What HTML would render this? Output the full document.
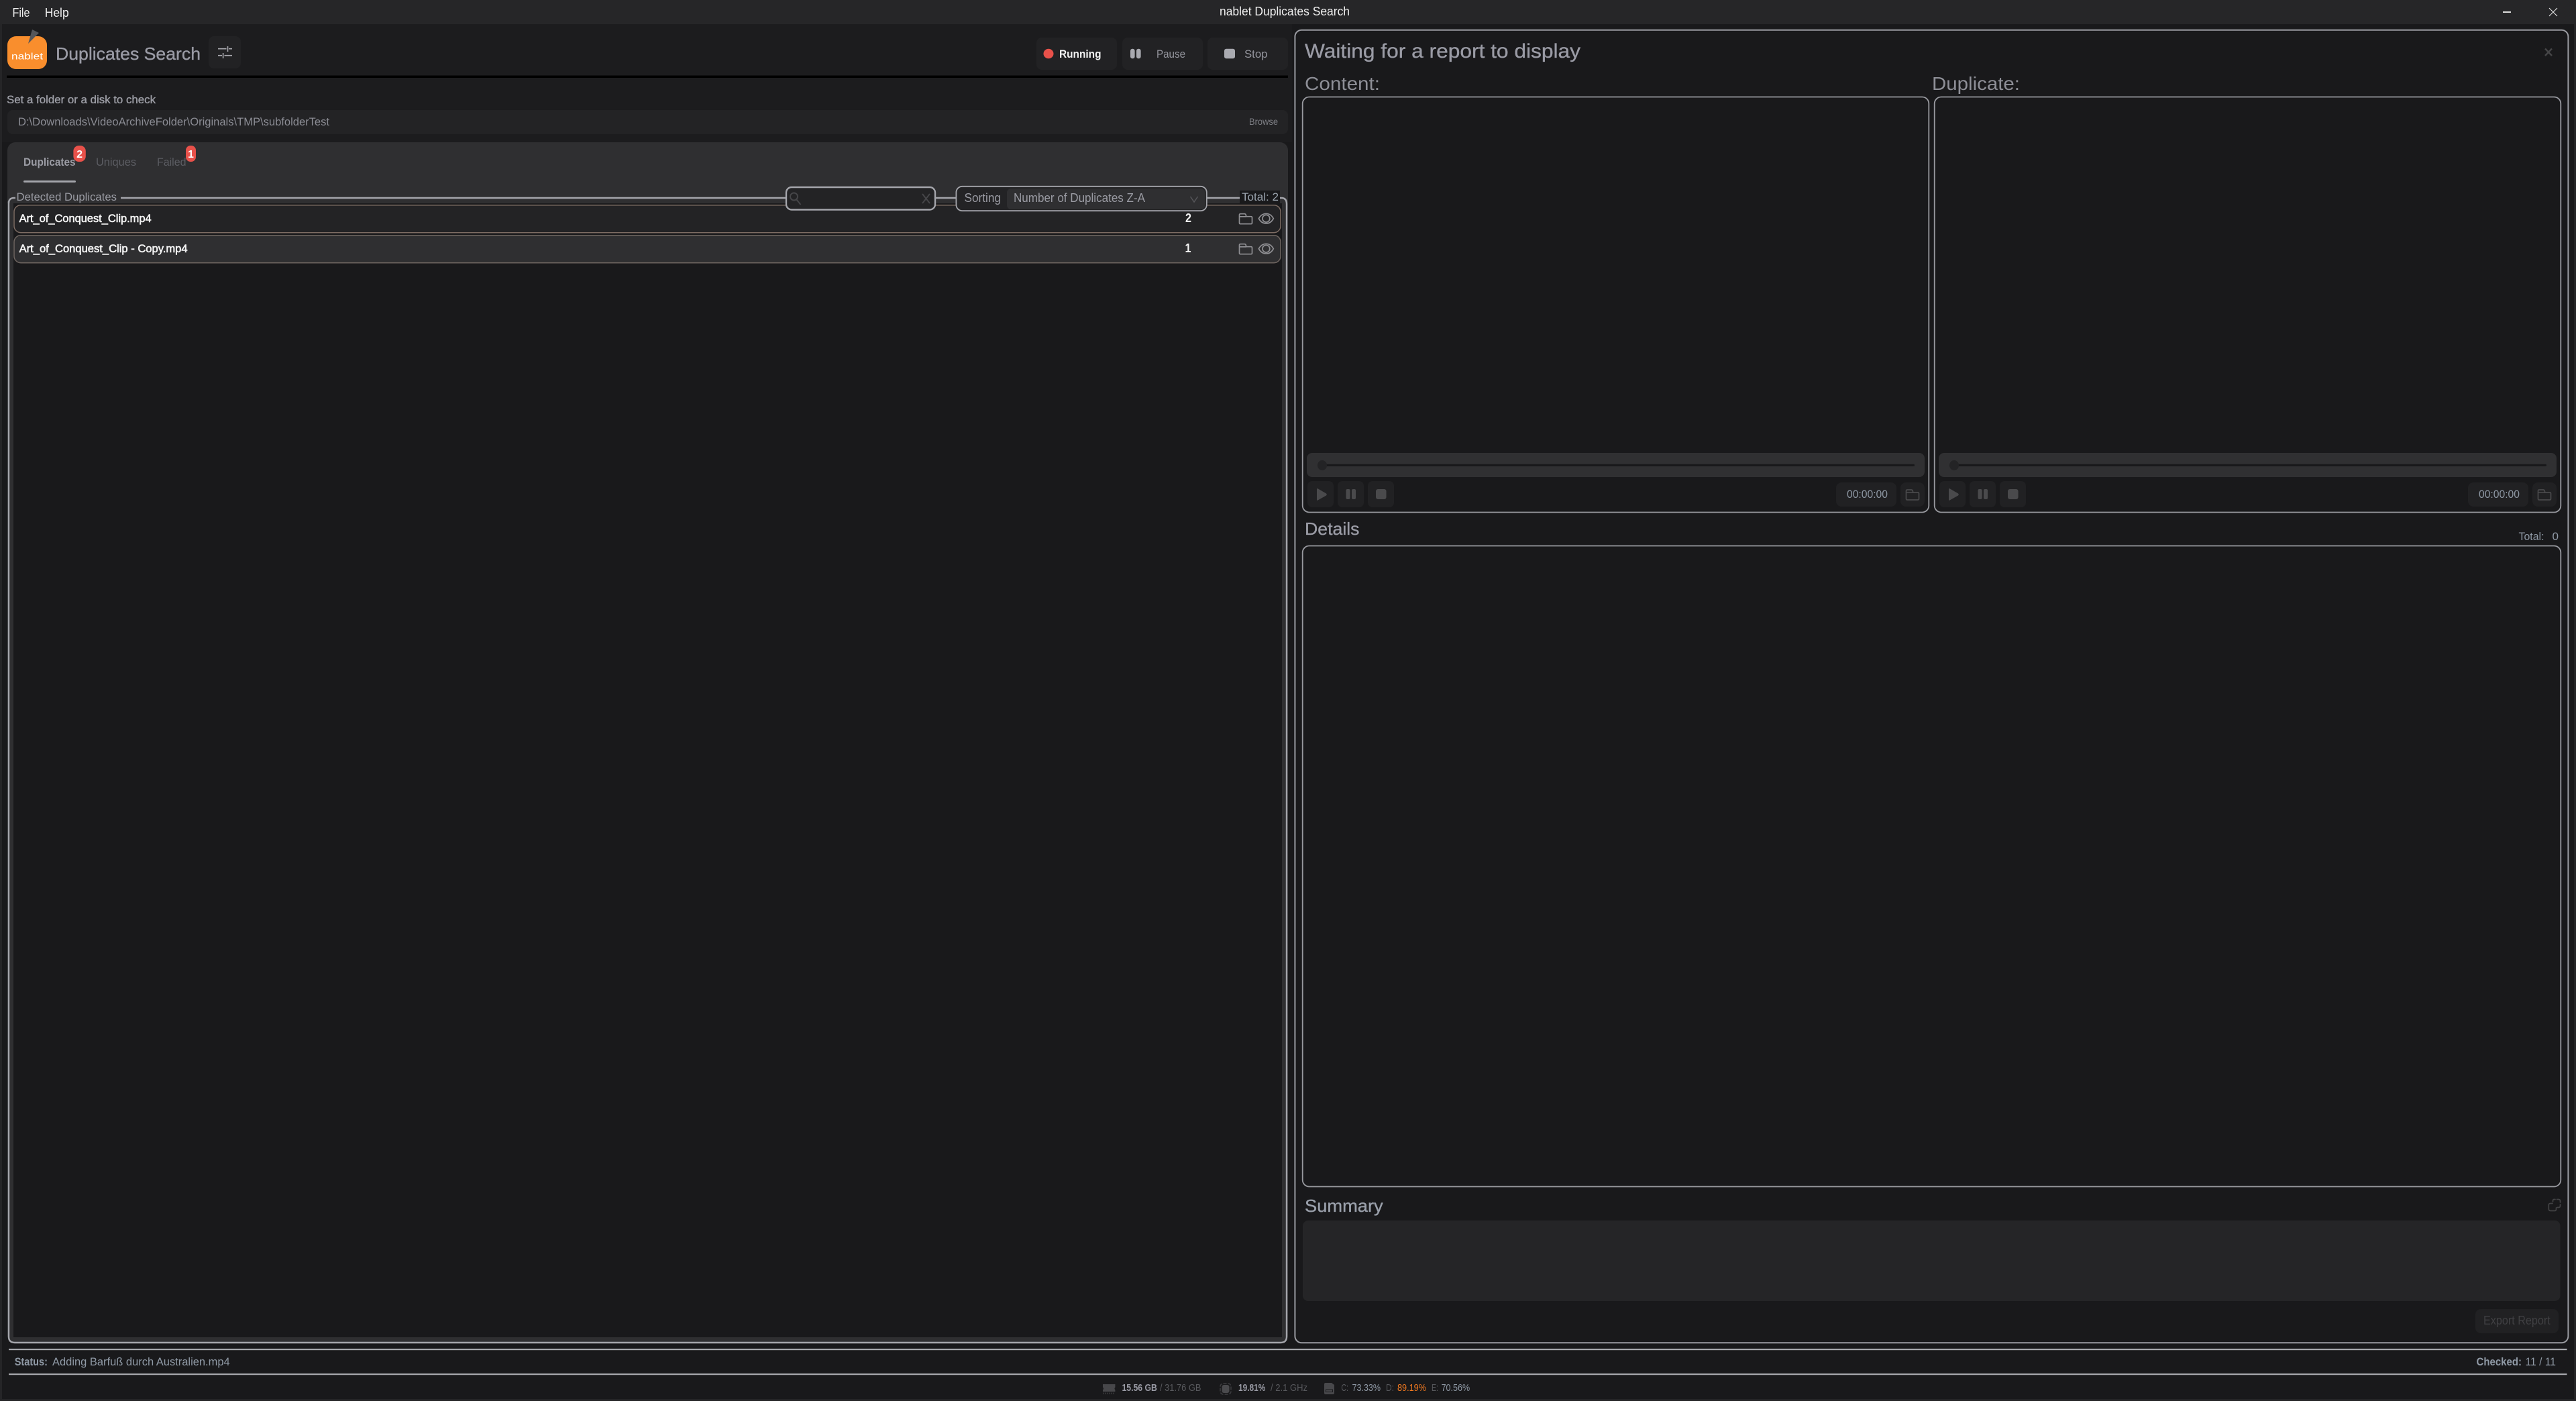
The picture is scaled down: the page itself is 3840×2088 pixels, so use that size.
<!DOCTYPE html>
<html lang="en"><head><meta charset="utf-8"><title>nablet Duplicates Search</title>
<style>
html,body{margin:0;padding:0;background:#19191b;width:3840px;height:2088px;overflow:hidden}
svg{display:block}
text{font-family:"Liberation Sans",sans-serif;white-space:pre}
.b{font-weight:700}
.s{stroke-width:.35px}
.m{stroke-width:.6px}
</style></head><body>
<svg xmlns="http://www.w3.org/2000/svg" width="3840" height="2088" viewBox="0 0 3840 2088">
<defs>
<g id="folder" fill="none" stroke-width="1.7" stroke-linejoin="round"><path d="M1 14.5V2.6Q1 1 2.6 1H8.6Q10.2 1 10.7 2.6L11.3 5H18.4Q20 5 20 6.6V14.4Q20 16 18.4 16H2.6Q1 16 1 14.5ZM1 5.2H11.3"/></g>
<g id="eye" fill="none" stroke="#8f8f93" stroke-width="1.7"><path d="M.7 8.2C6 -1.5 17.5 -1.5 22.6 8.2C17.5 18 6 18 .7 8.2Z"/><circle cx="11.7" cy="8.2" r="5.4"/></g>
</defs>
<rect width="3840" height="2088" fill="#19191b"/>
<!-- window chrome -->
<rect width="3840" height="36" fill="#262628"/>
<rect x="0" y="36" width="3" height="2052" fill="#252527"/>
<rect x="3837" y="36" width="3" height="2052" fill="#252527"/>
<rect x="0" y="2085" width="3840" height="3" fill="#252527"/>
<text x="18.5" y="25" font-size="18" fill="#eeeeee" textLength="26" lengthAdjust="spacingAndGlyphs">File</text>
<text x="66.7" y="25" font-size="18" fill="#eeeeee" textLength="36" lengthAdjust="spacingAndGlyphs">Help</text>
<text x="1818" y="23" font-size="18" fill="#eeeeee" textLength="194" lengthAdjust="spacingAndGlyphs">nablet Duplicates Search</text>
<rect x="3731" y="17" width="12" height="2" fill="#dddddd"/>
<path d="M3800 12L3812 24M3812 12L3800 24" stroke="#e8e8e8" stroke-width="1" fill="none"/>

<!-- left header -->
<rect x="3" y="36" width="1923" height="176" fill="#1c1c1e"/>
<rect x="11" y="54" width="59" height="49" rx="13" fill="#f98e2d"/>
<path d="M42 65L48 44L58 49Z" fill="#55565a"/>
<text x="17" y="88.5" font-size="14" fill="#ffffff" textLength="47" lengthAdjust="spacingAndGlyphs">nablet</text>
<text x="83" y="89" font-size="26" fill="#9a9ba5" class="s" stroke="#9a9ba5" textLength="216" lengthAdjust="spacingAndGlyphs">Duplicates Search</text>
<rect x="311" y="54" width="48" height="48" rx="8" fill="#222224"/>
<path d="M325 72.7H337.5M341 72.7H346M339.5 69V77M325 82.7H331M334.5 82.7H346M332.6 79V87" stroke="#aaaab0" stroke-width="1.6" fill="none"/>

<rect x="1545" y="56" width="120" height="48" rx="8" fill="#222224"/>
<rect x="1673" y="56" width="120" height="48" rx="8" fill="#222224"/>
<rect x="1800" y="56" width="120" height="48" rx="8" fill="#222224"/>
<ellipse cx="1563" cy="80" rx="7.5" ry="7.3" fill="#e8514a"/>
<text x="1579" y="86" font-size="17" class="b" fill="#f2f2f2" textLength="62.5" lengthAdjust="spacingAndGlyphs">Running</text>
<rect x="1685" y="72.7" width="6.6" height="14.6" rx="3" fill="#a9aab0"/>
<rect x="1694" y="72.7" width="6.6" height="14.6" rx="3" fill="#a9aab0"/>
<text x="1724" y="86" font-size="17" fill="#95969e" textLength="43" lengthAdjust="spacingAndGlyphs">Pause</text>
<rect x="1825" y="72.7" width="16" height="14.6" rx="3" fill="#a9aab0"/>
<text x="1855" y="86" font-size="17" fill="#95969e" textLength="34.5" lengthAdjust="spacingAndGlyphs">Stop</text>
<rect x="10" y="112.5" width="1910" height="3.5" fill="#000000"/>

<text x="10" y="154" font-size="17" fill="#9d9ea6" class="s" stroke="#9d9ea6" textLength="222" lengthAdjust="spacingAndGlyphs">Set a folder or a disk to check</text>
<rect x="11" y="164" width="1909" height="36" rx="8" fill="#232325"/>
<text x="27" y="187" font-size="17" fill="#8b8c94" textLength="464" lengthAdjust="spacingAndGlyphs">D:\Downloads\VideoArchiveFolder\Originals\TMP\subfolderTest</text>
<text x="1862" y="186" font-size="14" fill="#7e7f85" textLength="43" lengthAdjust="spacingAndGlyphs">Browse</text>

<!-- results panel -->
<rect x="11" y="212" width="1909" height="1790" rx="12" fill="#2f2f31"/>
<rect x="20" y="303" width="1891" height="1690" fill="#19191b"/>
<text x="35" y="247" font-size="17" fill="#9c9da5" class="b" textLength="77.6" lengthAdjust="spacingAndGlyphs">Duplicates</text>
<rect x="35" y="269" width="78" height="3" rx="1.5" fill="#a4a5ab"/>
<text x="143" y="247" font-size="17" fill="#5c5d63" textLength="60" lengthAdjust="spacingAndGlyphs">Uniques</text>
<text x="234" y="247" font-size="17" fill="#5c5d63" textLength="43.5" lengthAdjust="spacingAndGlyphs">Failed</text>
<rect x="109.4" y="217" width="18.4" height="24" rx="8" fill="#e8514a"/>
<text x="118.6" y="235" font-size="16" class="b" fill="#ffffff" text-anchor="middle">2</text>
<rect x="277" y="217" width="15" height="24" rx="7" fill="#e8514a"/>
<text x="284.5" y="235" font-size="16" class="b" fill="#ffffff" text-anchor="middle">1</text>

<path d="M13 303Q13 295 21 295H23" fill="none" stroke="#a4a5ab" stroke-width="2.4"/>
<path d="M13 300V1992Q13 2001 22 2001H1909Q1918 2001 1918 1992V304Q1918 295 1910 295H1906" fill="none" stroke="#a4a5ab" stroke-width="2.4"/>
<path d="M180 295H1172M1395 295H1425M1799 295H1850" stroke="#a4a5ab" stroke-width="2.4" fill="none"/>
<text x="24.5" y="299" font-size="17" fill="#9a9ba3" textLength="149.5" lengthAdjust="spacingAndGlyphs">Detected Duplicates</text>
<rect x="1848" y="284" width="60" height="19" fill="#19191b"/>
<text x="1851" y="299" font-size="17" fill="#9aa3ad" textLength="55" lengthAdjust="spacingAndGlyphs">Total: 2</text>

<rect x="21" y="305.7" width="1888" height="41" rx="10" fill="#232325" stroke="#7d6c63" stroke-width="1.5"/>
<rect x="21" y="350.7" width="1888" height="41" rx="10" fill="#2f2f31" stroke="#6e6560" stroke-width="1.5"/>
<text x="28.6" y="331" font-size="17" class="m" fill="#f4f4f4" stroke="#f4f4f4" textLength="197" lengthAdjust="spacingAndGlyphs">Art_of_Conquest_Clip.mp4</text>
<text x="28.6" y="376" font-size="17" class="m" fill="#f4f4f4" stroke="#f4f4f4" textLength="251" lengthAdjust="spacingAndGlyphs">Art_of_Conquest_Clip - Copy.mp4</text>
<text x="1767" y="331" font-size="18" class="b" fill="#f4f4f4" textLength="9" lengthAdjust="spacingAndGlyphs">2</text>
<text x="1766.5" y="376" font-size="18" class="b" fill="#f4f4f4" textLength="9" lengthAdjust="spacingAndGlyphs">1</text>
<use href="#folder" x="1846.5" y="317.7" stroke="#8f8f93"/>
<use href="#eye" x="1875.7" y="317.5"/>
<use href="#folder" x="1846.5" y="362.7" stroke="#8f8f93"/>
<use href="#eye" x="1875.7" y="362.5"/>

<rect x="1172" y="279" width="222" height="33.5" rx="8" fill="#232325" stroke="#a4a5ab" stroke-width="2.4"/>
<g fill="none" stroke="#454548" stroke-width="2"><circle cx="1183.5" cy="293" r="5.5"/><path d="M1187.5 297.5L1193.5 305"/><path d="M1375 289L1386 303M1386 289L1375 303"/></g>
<rect x="1425.4" y="277.8" width="373.4" height="36.4" rx="9" fill="#232325" stroke="#a4a5ab" stroke-width="1.8"/>
<text x="1437.5" y="301" font-size="18" fill="#9a9ba3" textLength="54.5" lengthAdjust="spacingAndGlyphs">Sorting</text>
<rect x="1501" y="281" width="295" height="31" rx="6" fill="#2f2f31"/>
<text x="1511" y="301" font-size="18" fill="#9a9ba3" textLength="196" lengthAdjust="spacingAndGlyphs">Number of Duplicates Z-A</text>
<path d="M1774.5 293L1780 301L1785.5 293" stroke="#56565a" stroke-width="1.5" fill="none"/>

<!-- right panel -->
<rect x="1930.4" y="44.7" width="1898" height="1956.6" rx="10" fill="#19191b" stroke="#9a9ba1" stroke-width="2"/>
<text x="1945" y="86" font-size="30" fill="#9a9ba5" class="s" stroke="#9a9ba5" textLength="411" lengthAdjust="spacingAndGlyphs">Waiting for a report to display</text>
<path d="M3794 72.5L3804 83M3804 72.5L3794 83" stroke="#454547" stroke-width="2.4" fill="none"/>
<text x="1945" y="134" font-size="28" fill="#8e8f97" textLength="112" lengthAdjust="spacingAndGlyphs">Content:</text>
<text x="2880" y="134" font-size="28" fill="#8e8f97" textLength="131" lengthAdjust="spacingAndGlyphs">Duplicate:</text>

<rect x="1941.7" y="144.5" width="933.6" height="619" rx="10" fill="#19191b" stroke="#98999f" stroke-width="1.8"/>
<rect x="2883.7" y="144.5" width="933.6" height="619" rx="10" fill="#19191b" stroke="#98999f" stroke-width="1.8"/>

<!-- content player -->
<rect x="1948" y="675" width="921" height="36" rx="8" fill="#303032"/>
<rect x="1964" y="691.8" width="890" height="3.2" rx="1.6" fill="#19191b"/>
<ellipse cx="1971" cy="693.5" rx="7" ry="7.5" fill="#232325"/>
<rect x="1949" y="717" width="39" height="39" rx="7" fill="#212123"/>
<rect x="1994" y="717" width="39" height="39" rx="7" fill="#212123"/>
<rect x="2039" y="717" width="39" height="39" rx="7" fill="#212123"/>
<path d="M1963 729Q1963 727.5 1964.5 728.3L1977 735.5Q1978.5 737 1977 738.5L1964.5 745.5Q1963 746.5 1963 745Z" fill="#4a4a4c"/>
<rect x="2006.5" y="729" width="6" height="15" rx="2" fill="#4a4a4c"/>
<rect x="2015" y="729" width="6" height="15" rx="2" fill="#4a4a4c"/>
<rect x="2051" y="729" width="15.5" height="15" rx="3" fill="#4a4a4c"/>
<rect x="2737" y="719" width="90" height="36" rx="8" fill="#212123"/>
<text x="2753" y="742" font-size="17" fill="#8f99a5" textLength="61" lengthAdjust="spacingAndGlyphs">00:00:00</text>
<rect x="2833" y="719" width="36" height="36" rx="8" fill="#212123"/>
<use href="#folder" x="2840.5" y="729" stroke="#4a4a4c"/>

<!-- duplicate player -->
<rect x="2890" y="675" width="921" height="36" rx="8" fill="#303032"/>
<rect x="2906" y="691.8" width="890" height="3.2" rx="1.6" fill="#19191b"/>
<ellipse cx="2913" cy="693.5" rx="7" ry="7.5" fill="#232325"/>
<rect x="2891" y="717" width="39" height="39" rx="7" fill="#212123"/>
<rect x="2936" y="717" width="39" height="39" rx="7" fill="#212123"/>
<rect x="2981" y="717" width="39" height="39" rx="7" fill="#212123"/>
<path d="M2905 729Q2905 727.5 2906.5 728.3L2919 735.5Q2920.5 737 2919 738.5L2906.5 745.5Q2905 746.5 2905 745Z" fill="#4a4a4c"/>
<rect x="2948.5" y="729" width="6" height="15" rx="2" fill="#4a4a4c"/>
<rect x="2957" y="729" width="6" height="15" rx="2" fill="#4a4a4c"/>
<rect x="2993" y="729" width="15.5" height="15" rx="3" fill="#4a4a4c"/>
<rect x="3679" y="719" width="90" height="36" rx="8" fill="#212123"/>
<text x="3695" y="742" font-size="17" fill="#8f99a5" textLength="61" lengthAdjust="spacingAndGlyphs">00:00:00</text>
<rect x="3775" y="719" width="36" height="36" rx="8" fill="#212123"/>
<use href="#folder" x="3782.5" y="729" stroke="#4a4a4c"/>

<text x="1945" y="797" font-size="26" fill="#9a9ba5" class="s" stroke="#9a9ba5" textLength="81.5" lengthAdjust="spacingAndGlyphs">Details</text>
<text x="3754.5" y="805" font-size="17" fill="#8f99a5" textLength="38" lengthAdjust="spacingAndGlyphs">Total:</text>
<text x="3804.5" y="805" font-size="17" fill="#8f99a5" textLength="9.5" lengthAdjust="spacingAndGlyphs">0</text>
<rect x="1941.7" y="813.5" width="1875.6" height="955" rx="10" fill="#19191b" stroke="#98999f" stroke-width="1.8"/>

<text x="1945" y="1806" font-size="26" fill="#9aa0ab" class="s" stroke="#9aa0ab" textLength="116.7" lengthAdjust="spacingAndGlyphs">Summary</text>
<g fill="none" stroke="#434345" stroke-width="1.7" stroke-linecap="round"><path d="M3805.5 1791V1789.5Q3805.5 1787.5 3807.5 1787.5H3809M3811.5 1787.5H3814Q3816.5 1787.5 3816.5 1790V1792M3816.5 1795V1797Q3816.5 1799.5 3814 1799.5H3812"/><path d="M3805 1793.5H3802Q3799.3 1793.5 3799.3 1796V1801.5Q3799.3 1804.5 3802 1804.5H3808Q3810.5 1804.5 3810.5 1802V1800"/></g>
<rect x="1942" y="1819" width="1874.5" height="120" rx="8" fill="#252527"/>
<rect x="3690" y="1951" width="124" height="36" rx="8" fill="#212123"/>
<text x="3702" y="1974" font-size="18" fill="#404043" textLength="99.7" lengthAdjust="spacingAndGlyphs">Export Report</text>

<!-- status -->
<rect x="13" y="2010" width="3813.5" height="2.2" fill="#a8a9ae"/>
<rect x="13" y="2047" width="3813.5" height="2.2" fill="#a8a9ae"/>
<text x="21.7" y="2035" font-size="17" class="b" fill="#8f99a5" textLength="49.3" lengthAdjust="spacingAndGlyphs">Status:</text>
<text x="78" y="2035" font-size="17" fill="#8f99a5" textLength="264.7" lengthAdjust="spacingAndGlyphs">Adding Barfuß durch Australien.mp4</text>
<text x="3691.5" y="2035" font-size="17" class="b" fill="#8f99a5" textLength="67.5" lengthAdjust="spacingAndGlyphs">Checked:</text>
<text x="3764.5" y="2035" font-size="17" fill="#8f99a5" textLength="45.5" lengthAdjust="spacingAndGlyphs">11 / 11</text>

<!-- system stats -->
<path d="M1644 2063H1662.4V2067.5Q1660.5 2069.5 1662.4 2071.5V2074H1644V2071.5Q1646 2069.5 1644 2067.5Z" fill="#47474a"/>
<path d="M1645 2075.5V2078M1648 2075.5V2078M1651 2075.5V2078M1654 2075.5V2078M1657 2075.5V2078M1660 2075.5V2078" stroke="#47474a" stroke-width="1" fill="none"/>
<text x="1672.5" y="2073" font-size="14.5" class="b" fill="#9a9ba5" textLength="52.3" lengthAdjust="spacingAndGlyphs">15.56 GB</text>
<text x="1729" y="2073" font-size="14.5" fill="#58595d" textLength="61.5" lengthAdjust="spacingAndGlyphs">/ 31.76 GB</text>
<rect x="1819" y="2062" width="16" height="16" rx="4.5" fill="none" stroke="#3c3c3f" stroke-width="1.5" stroke-dasharray="5 2"/>
<rect x="1821.5" y="2064" width="11" height="12" rx="3" fill="#4a4a4d"/>
<text x="1846" y="2073" font-size="14.5" class="b" fill="#9a9ba5" textLength="40.4" lengthAdjust="spacingAndGlyphs">19.81%</text>
<text x="1894" y="2073" font-size="14.5" fill="#58595d" textLength="55" lengthAdjust="spacingAndGlyphs">/ 2.1 GHz</text>
<path d="M1976 2061H1985L1989 2064V2076Q1989 2078 1987 2078H1976Q1974 2078 1974 2076V2063Q1974 2061 1976 2061Z" fill="#48484b"/>
<rect x="1976.5" y="2071" width="10" height="3.5" fill="none" stroke="#1c1c1e" stroke-width="1"/>
<text x="1999.4" y="2073" font-size="14.5" fill="#58595d" textLength="10.6" lengthAdjust="spacingAndGlyphs">C:</text>
<text x="2015.5" y="2073" font-size="14.5" fill="#8f99a5" textLength="42.5" lengthAdjust="spacingAndGlyphs">73.33%</text>
<text x="2066" y="2073" font-size="14.5" fill="#58595d" textLength="12" lengthAdjust="spacingAndGlyphs">D:</text>
<text x="2083" y="2073" font-size="14.5" fill="#f47a20" textLength="43" lengthAdjust="spacingAndGlyphs">89.19%</text>
<text x="2134" y="2073" font-size="14.5" fill="#58595d" textLength="10" lengthAdjust="spacingAndGlyphs">E:</text>
<text x="2148.6" y="2073" font-size="14.5" fill="#8f99a5" textLength="42.5" lengthAdjust="spacingAndGlyphs">70.56%</text>
</svg>
</body></html>
